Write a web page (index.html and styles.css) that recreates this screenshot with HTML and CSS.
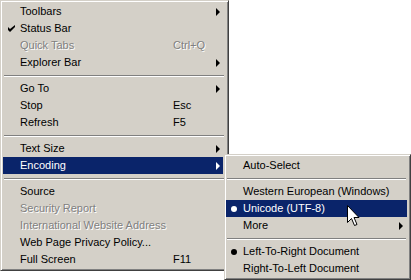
FILE: index.html
```html
<!DOCTYPE html>
<html lang="en">
<head>
  <meta charset="UTF-8" />
  <meta name="viewport" content="width=device-width, initial-scale=1.0" />
  <title>View menu</title>
  <link rel="stylesheet" href="styles.css">
</head>
<body>
  <div class="desk">
    <!-- View menu -->
    <div class="menu main-menu">
      <div class="item"><span class="mark"></span><span class="label">Toolbars</span><span class="key"></span><span class="arrow"></span></div>
      <div class="item"><span class="mark"><svg class="check" width="7" height="7" viewBox="0 0 7 7"><path d="M0 2 L2 4 L7 0 L7 2 L2 7 L0 5 Z" /></svg></span><span class="label">Status Bar</span><span class="key"></span><span class="no-arrow"></span></div>
      <div class="item disabled"><span class="mark"></span><span class="label">Quick Tabs</span><span class="key">Ctrl+Q</span><span class="no-arrow"></span></div>
      <div class="item"><span class="mark"></span><span class="label">Explorer Bar</span><span class="key"></span><span class="arrow"></span></div>
      <div class="sep"></div>
      <div class="item"><span class="mark"></span><span class="label">Go To</span><span class="key"></span><span class="arrow"></span></div>
      <div class="item"><span class="mark"></span><span class="label">Stop</span><span class="key">Esc</span><span class="no-arrow"></span></div>
      <div class="item"><span class="mark"></span><span class="label">Refresh</span><span class="key">F5</span><span class="no-arrow"></span></div>
      <div class="sep"></div>
      <div class="item"><span class="mark"></span><span class="label">Text Size</span><span class="key"></span><span class="arrow"></span></div>
      <div class="item active"><span class="mark"></span><span class="label">Encoding</span><span class="key"></span><span class="arrow"></span></div>
      <div class="sep"></div>
      <div class="item"><span class="mark"></span><span class="label">Source</span><span class="key"></span><span class="no-arrow"></span></div>
      <div class="item disabled"><span class="mark"></span><span class="label">Security Report</span><span class="key"></span><span class="no-arrow"></span></div>
      <div class="item disabled"><span class="mark"></span><span class="label">International Website Address</span><span class="key"></span><span class="no-arrow"></span></div>
      <div class="item"><span class="mark"></span><span class="label">Web Page Privacy Policy...</span><span class="key"></span><span class="no-arrow"></span></div>
      <div class="item"><span class="mark"></span><span class="label">Full Screen</span><span class="key">F11</span><span class="no-arrow"></span></div>
    </div>

    <!-- Encoding submenu -->
    <div class="menu sub-menu">
      <div class="item"><span class="mark"></span><span class="label">Auto-Select</span><span class="arrow-space"></span></div>
      <div class="sep"></div>
      <div class="item"><span class="mark"></span><span class="label">Western European (Windows)</span><span class="arrow-space"></span></div>
      <div class="item active"><span class="mark"><span class="bullet"></span></span><span class="label">Unicode (UTF-8)</span><span class="arrow-space"></span></div>
      <div class="item"><span class="mark"></span><span class="label">More</span><span class="arrow"></span></div>
      <div class="sep"></div>
      <div class="item"><span class="mark"><span class="bullet"></span></span><span class="label">Left-To-Right Document</span><span class="arrow-space"></span></div>
      <div class="item"><span class="mark"></span><span class="label">Right-To-Left Document</span><span class="arrow-space"></span></div>
    </div>

    <!-- mouse pointer -->
    <svg class="pointer" width="13" height="22" viewBox="0 0 13 22">
      <path d="M0.5 0.5 L0.5 17.5 L4.5 13.5 L7.5 20.5 L10 19.5 L7 12.5 L12 12.5 Z" fill="#fff" stroke="#000" stroke-width="1" />
    </svg>
  </div>
</body>
</html>
```

FILE: styles.css
```css
* {
  box-sizing: border-box;
}
body {
  margin: 0;
  background: #fff;
  font-family: "Liberation Sans", Arial, sans-serif;
  font-size: 11px;
  color: #000;
}
.desk {
  position: relative;
  width: 411px;
  height: 280px;
  overflow: hidden;
}
.menu {
  display: flex;
  flex-direction: column;
  background: #d4d0c8;
  border: 1px solid;
  border-color: #d4d0c8 #404040 #404040 #d4d0c8;
  box-shadow: inset 1px 1px #fff, inset -1px -1px #808080;
}
.main-menu {
  width: 229px;
  padding: 2px 5px 2px 2px;
}
.sub-menu {
  position: absolute;
  left: 224px;
  top: 154px;
  width: 187px;
  padding: 2px 3px 2px 1px;
}
.item {
  display: flex;
  align-items: center;
  height: 17px;
  line-height: 17px;
  white-space: nowrap;
}
.item.active {
  background: #0a246a;
  color: #fff;
}
.item.disabled {
  color: #808080;
  text-shadow: 1px 1px 0 #fff;
}
.mark {
  flex: 0 0 17px;
  display: flex;
  align-items: center;
  justify-content: center;
  height: 17px;
}
.check {
  fill: currentColor;
  margin-left: -1px;
}
.bullet {
  width: 6px;
  height: 6px;
  border-radius: 50%;
  background: currentColor;
  margin-left: -1px;
}
.label {
  flex: 0 0 153px;
}
.sub-menu .label {
  flex: 1;
}
.key {
  flex: 1;
}
.arrow {
  width: 0;
  height: 0;
  border-left: 4px solid currentColor;
  border-top: 4px solid transparent;
  border-bottom: 4px solid transparent;
  margin-right: 3px;
}
.sub-menu .arrow {
  margin-right: 4px;
}
.no-arrow,
.arrow-space {
  width: 4px;
  margin-right: 3px;
}
.sep {
  height: 9px;
  padding: 4px 1px 0;
}
.main-menu .sep {
  margin-right: -2px;
}
.sep::before {
  content: "";
  display: block;
  border-top: 1px solid #808080;
  border-bottom: 1px solid #fff;
}
.pointer {
  position: absolute;
  left: 347px;
  top: 205px;
}
```
